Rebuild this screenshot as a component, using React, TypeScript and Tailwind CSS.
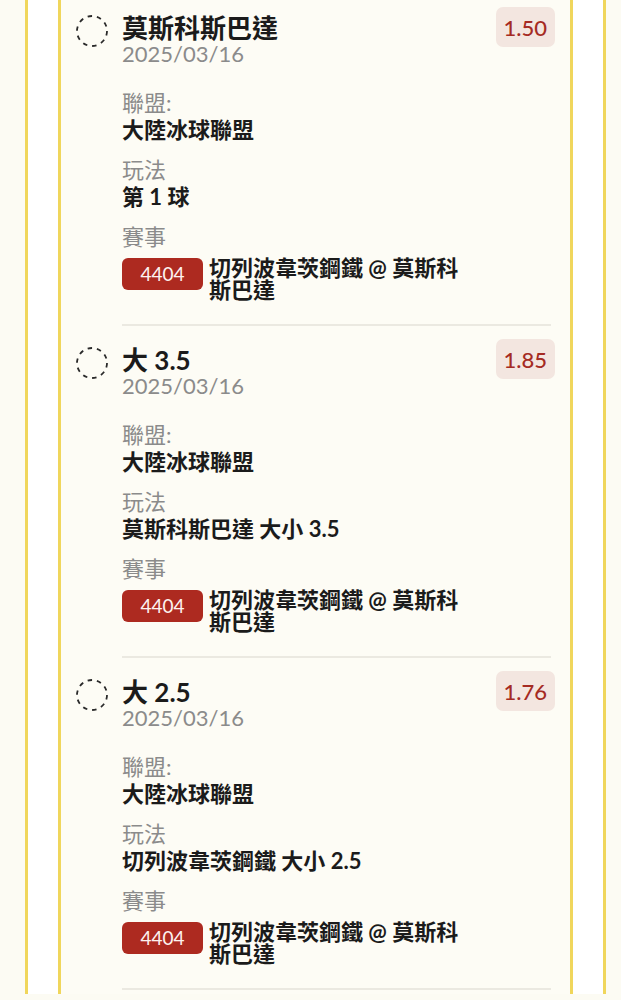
import React from "react";

interface Bet {
  title: string;
  date: string;
  odds: string;
  league: string;
  play: string;
  matchNo: string;
  match: string;
}

const bets: Bet[] = [
  {
    title: "莫斯科斯巴達",
    date: "2025/03/16",
    odds: "1.50",
    league: "大陸冰球聯盟",
    play: "第 1 球",
    matchNo: "4404",
    match: "切列波韋茨鋼鐵 @ 莫斯科斯巴達",
  },
  {
    title: "大 3.5",
    date: "2025/03/16",
    odds: "1.85",
    league: "大陸冰球聯盟",
    play: "莫斯科斯巴達 大小 3.5",
    matchNo: "4404",
    match: "切列波韋茨鋼鐵 @ 莫斯科斯巴達",
  },
  {
    title: "大 2.5",
    date: "2025/03/16",
    odds: "1.76",
    league: "大陸冰球聯盟",
    play: "切列波韋茨鋼鐵 大小 2.5",
    matchNo: "4404",
    match: "切列波韋茨鋼鐵 @ 莫斯科斯巴達",
  },
];

const DashedCircle = () => (
  <svg width="32" height="32" viewBox="0 0 32 32" className="shrink-0">
    <circle
      cx="16"
      cy="16"
      r="15"
      fill="none"
      stroke="#2a2a2a"
      strokeWidth="1.8"
      strokeDasharray="4.5 4.9"
    />
  </svg>
);

const Field = ({ label, value }: { label: string; value: string }) => (
  <div>
    <div className="text-[22px] leading-[27px] text-[#8b8b8b]">{label}</div>
    <div className="text-[22px] leading-[28px] font-bold text-[#1b1b1b]">{value}</div>
  </div>
);

const BetRow = ({ bet }: { bet: Bet }) => (
  <div className="flex">
    <div className="w-8 mt-[21px] shrink-0">
      <DashedCircle />
    </div>
    <div className="ml-[14px] flex-1 border-b-2 border-[#ebe9e1] pt-[13px] pb-[23px]">
      <div className="flex items-start justify-between">
        <div className="mt-[7px]">
          <div className="text-[26px] leading-[28px] font-bold text-[#1b1b1b]">{bet.title}</div>
          <div className="text-[22px] leading-[24px] text-[#8b8b8b]">{bet.date}</div>
        </div>
        <div className="-mr-[4px] h-[40px] px-[8px] rounded-[7px] bg-[#f3e6e0] flex items-center text-[22px] font-medium text-[#a52b23]">
          {bet.odds}
        </div>
      </div>

      <div className="mt-[23px] flex flex-col gap-[12px]">
        <Field label="聯盟:" value={bet.league} />
        <Field label="玩法" value={bet.play} />
        <div>
          <div className="text-[22px] leading-[27px] text-[#8b8b8b]">賽事</div>
          <div className="mt-[8px] flex items-start gap-[6px]">
            <span className="w-[81px] h-[32px] rounded-[6px] bg-[#ad2a20] text-[#fdf3f0] text-[19px] flex items-center justify-center shrink-0">
              {bet.matchNo}
            </span>
            <span className="-mt-[1px] max-w-[262px] text-[22px] leading-[22px] font-bold text-[#1b1b1b]">
              {bet.match}
            </span>
          </div>
        </div>
      </div>
    </div>
  </div>
);

export default function App() {
  return (
    <div className="h-[1000px] overflow-hidden bg-[#fcfbf3] pl-[25px] pr-[15px] font-[Lato,'Noto_Sans_CJK_TC',sans-serif]">
      <div className="h-full border-x-[3px] border-[#f0d65c] bg-white px-[30px]">
        <div className="h-full border-x-[3px] border-[#f0d65c] bg-[#fdfcf5] pl-[15px] pr-[19px]">
          <div className="-mt-[6px]">
            {bets.map((bet, i) => (
              <BetRow key={i} bet={bet} />
            ))}
          </div>
        </div>
      </div>
    </div>
  );
}
